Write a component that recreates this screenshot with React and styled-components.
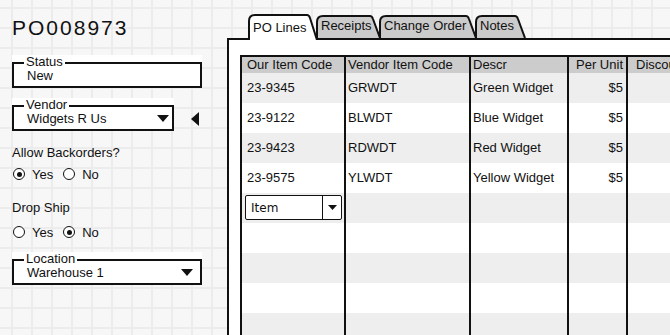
import React from "react";
import styled, { createGlobalStyle } from "styled-components";

const GlobalStyle = createGlobalStyle`
	* { box-sizing: border-box; }
	body {
		margin: 0;
		font-family: "Liberation Sans", Arial, sans-serif;
		color: #111;
	}
`;

const COLS = "104px 125px 98px 59px 120px";

const rows = [
	{ code: "23-9345", vendor: "GRWDT", descr: "Green Widget", unit: "$5" },
	{ code: "23-9122", vendor: "BLWDT", descr: "Blue Widget", unit: "$5" },
	{ code: "23-9423", vendor: "RDWDT", descr: "Red Widget", unit: "$5" },
	{ code: "23-9575", vendor: "YLWDT", descr: "Yellow Widget", unit: "$5" },
];

const tabs = [
	{ label: "PO Lines", width: 70, active: true },
	{ label: "Receipts", width: 65 },
	{ label: "Change Order", width: 98 },
	{ label: "Notes", width: 51 },
];

function DownArrow() {
	return (
		<svg width="12" height="7" viewBox="0 0 12 7">
			<polygon points="0,0 12,0 6,7" fill="#111" />
		</svg>
	);
}

function TabShape({ width, height, active }) {
	const w = width;
	const h = height;
	return (
		<TabSvg width={w} height={h} viewBox={`0 0 ${w} ${h}`}>
			<path
				d={`M1 ${h} V7 Q1 1 7 1 H${w - 11} Q${w - 9} 1 ${w - 8} 4 L${w - 1} ${h}`}
				fill={active ? "#fff" : "#cbcbcb"}
				stroke="#111"
				strokeWidth="2"
			/>
		</TabSvg>
	);
}

export default function App() {
	return (
		<Page>
			<GlobalStyle />
			<LeftCol>
				<Title>PO008973</Title>
				<Field $mt={14} $width={190}>
					<FieldLabel>Status</FieldLabel>
					<FieldBox>New</FieldBox>
				</Field>
				<VendorRow>
					<Field $mt={0} $width={162}>
						<FieldLabel>Vendor</FieldLabel>
						<FieldBox>
							Widgets R Us
							<ArrowSlot $right={3}>
								<DownArrow />
							</ArrowSlot>
						</FieldBox>
					</Field>
					<Pointer width="8" height="14" viewBox="0 0 8 14">
						<polygon points="8,0 8,14 0,7" fill="#111" />
					</Pointer>
				</VendorRow>
				<Question $mt={14}>Allow Backorders?</Question>
				<RadioRow $mt={5}>
					<Radio $checked />
					<RadioLabel>Yes</RadioLabel>
					<Radio />
					<RadioLabel>No</RadioLabel>
				</RadioRow>
				<Question $mt={18}>Drop Ship</Question>
				<RadioRow $mt={8}>
					<Radio />
					<RadioLabel>Yes</RadioLabel>
					<Radio $checked />
					<RadioLabel>No</RadioLabel>
				</RadioRow>
				<Field $mt={12} $width={190}>
					<FieldLabel>Location</FieldLabel>
					<FieldBox>
						Warehouse 1
						<ArrowSlot $right={7}>
							<DownArrow />
						</ArrowSlot>
					</FieldBox>
				</Field>
			</LeftCol>
			<RightCol>
				<TabStrip>
					{tabs.map((t) => (
						<Tab key={t.label} $width={t.width} $active={t.active}>
							<TabShape width={t.width} height={t.active ? 26 : 23} active={t.active} />
							<TabText $active={t.active}>{t.label}</TabText>
						</Tab>
					))}
				</TabStrip>
				<Panel>
					<Table>
						<HeadRow>
							<Cell $pl={5}>Our Item Code</Cell>
							<Cell>Vendor Item Code</Cell>
							<Cell>Descr</Cell>
							<Cell $right>Per Unit</Cell>
							<Cell $pl={8}>Discount</Cell>
						</HeadRow>
						{rows.map((r, i) => (
							<Row key={r.code} $shade={i % 2 === 0}>
								<Cell $pl={5}>{r.code}</Cell>
								<Cell>{r.vendor}</Cell>
								<Cell>{r.descr}</Cell>
								<Cell $right>{r.unit}</Cell>
								<Cell />
							</Row>
						))}
						<Row $shade>
							<Cell $pl={3}>
								<ItemSelect>
									<span>Item</span>
									<SelectButton>
										<svg width="9" height="5" viewBox="0 0 9 5">
											<polygon points="0,0 9,0 4.5,5" fill="#111" />
										</svg>
									</SelectButton>
								</ItemSelect>
							</Cell>
							<Cell />
							<Cell />
							<Cell />
							<Cell />
						</Row>
						{[0, 1, 2, 3].map((n) => (
							<Row key={n} $shade={n % 2 === 1}>
								<Cell />
								<Cell />
								<Cell />
								<Cell />
								<Cell />
							</Row>
						))}
					</Table>
				</Panel>
			</RightCol>
		</Page>
	);
}

const Page = styled.div`
	display: flex;
	width: 670px;
	height: 335px;
	overflow: hidden;
	background-color: #f7f7f7;
	background-image: linear-gradient(#ececec 2px, transparent 2px),
		linear-gradient(90deg, #ececec 2px, transparent 2px);
	background-size: 20px 20px;
	background-position: 11px 7px;
	font-size: 13px;
`;

const LeftCol = styled.div`
	width: 227px;
	flex-shrink: 0;
	padding-left: 12px;
	display: flex;
	flex-direction: column;
	align-items: flex-start;
`;

const Title = styled.h1`
	margin: 15px 0 0;
	font-size: 21px;
	line-height: 26px;
	font-weight: normal;
	letter-spacing: 2px;
`;

const Field = styled.div`
	position: relative;
	width: ${(p) => p.$width}px;
	margin-top: ${(p) => p.$mt}px;
	padding-top: 7px;
	background: #fff;
`;

const FieldLabel = styled.span`
	position: absolute;
	z-index: 1;
	top: 0;
	left: 12px;
	padding: 0 2px;
	line-height: 14px;
	background: #fff;
`;

const FieldBox = styled.div`
	position: relative;
	height: 26px;
	border: 2px solid #111;
	padding: 2px 0 0 13px;
	line-height: 20px;
	display: flex;
	align-items: center;
`;

const ArrowSlot = styled.span`
	position: absolute;
	right: ${(p) => p.$right}px;
	top: 8px;
	display: flex;
`;

const VendorRow = styled.div`
	display: flex;
	align-items: flex-start;
	margin-top: 10px;
`;

const Pointer = styled.svg`
	margin: 14px 0 0 17px;
`;

const Question = styled.div`
	margin-top: ${(p) => p.$mt}px;
	line-height: 16px;
`;

const RadioRow = styled.div`
	display: flex;
	align-items: center;
	height: 16px;
	margin-top: ${(p) => p.$mt}px;
	padding-left: 1px;
`;

const Radio = styled.span`
	width: 12px;
	height: 12px;
	border-radius: 50%;
	border: 1.5px solid #111;
	background: #fff;
	display: flex;
	align-items: center;
	justify-content: center;
	&::after {
		content: "";
		width: 5px;
		height: 5px;
		border-radius: 50%;
		background: ${(p) => (p.$checked ? "#111" : "transparent")};
	}
`;

const RadioLabel = styled.span`
	margin: 0 10px 0 7px;
`;

const RightCol = styled.div`
	flex: 1;
	min-width: 0;
	display: flex;
	flex-direction: column;
	padding-top: 14px;
`;

const TabStrip = styled.div`
	display: flex;
	align-items: flex-end;
	height: 24px;
	padding-left: 21px;
	position: relative;
	z-index: 1;
`;

const Tab = styled.div`
	position: relative;
	flex-shrink: 0;
	width: ${(p) => p.$width}px;
	height: ${(p) => (p.$active ? 26 : 23)}px;
	margin-bottom: ${(p) => (p.$active ? -2 : 0)}px;
	margin-right: -2px;
	z-index: ${(p) => (p.$active ? 2 : 1)};
`;

const TabSvg = styled.svg`
	position: absolute;
	left: 0;
	top: 0;
`;

const TabText = styled.span`
	position: relative;
	display: block;
	padding: ${(p) => (p.$active ? "6px 0 0 5px" : "3px 0 0 5px")};
	line-height: 16px;
	font-size: 13px;
	white-space: nowrap;
`;

const Panel = styled.div`
	flex: 1;
	background: #fff;
	border-left: 2px solid #111;
	border-top: 2px solid #111;
	padding: 15px 0 0 11px;
	overflow: hidden;
`;

const Table = styled.div`
	width: max-content;
	border-left: 2px solid #111;
	border-top: 2px solid #111;
`;

const Row = styled.div`
	display: grid;
	grid-template-columns: ${COLS};
	height: 30px;
	line-height: 30px;
	background: ${(p) => (p.$shade ? "#eeeeee" : "#fff")};
`;

const HeadRow = styled(Row)`
	height: 16px;
	line-height: 16px;
	background: #cccccc;
`;

const Cell = styled.div`
	border-right: 2px solid #111;
	padding: 0 3px 0 ${(p) => (p.$pl !== undefined ? p.$pl : 2)}px;
	text-align: ${(p) => (p.$right ? "right" : "left")};
	white-space: nowrap;
	overflow: hidden;
`;

const ItemSelect = styled.div`
	margin-top: 2px;
	width: 97px;
	height: 25px;
	border: 1.5px solid #111;
	border-radius: 2px;
	background: #fff;
	display: flex;
	align-items: center;
	font-family: "DejaVu Sans", sans-serif;
	font-size: 12px;
	line-height: 20px;
	span {
		flex: 1;
		padding-left: 5px;
	}
`;

const SelectButton = styled.div`
	width: 19px;
	height: 100%;
	border-left: 1.5px solid #111;
	display: flex;
	align-items: center;
	justify-content: center;
`;
